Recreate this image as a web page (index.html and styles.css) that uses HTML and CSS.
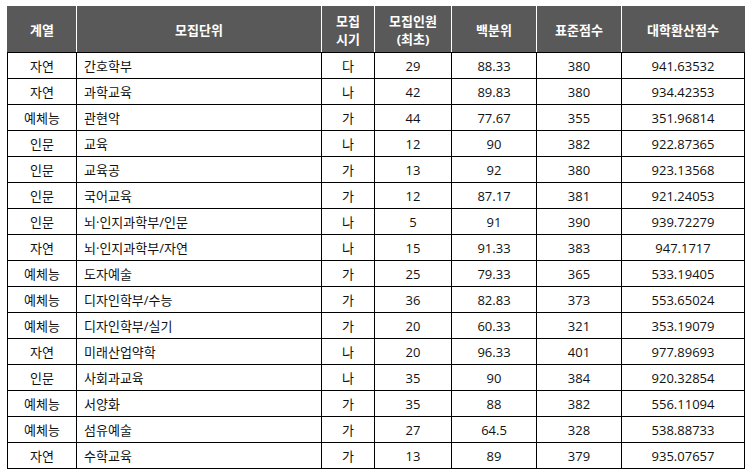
FILE: index.html
```html
<!DOCTYPE html>
<html lang="ko">
<head>
<meta charset="utf-8">
<link rel="stylesheet" href="styles.css">
</head>
<body>
<table class="grid">
  <colgroup>
    <col class="c1"><col class="c2"><col class="c3"><col class="c4"><col class="c5"><col class="c6"><col class="c7">
  </colgroup>
  <thead>
    <tr>
      <th>계열</th>
      <th>모집단위</th>
      <th>모집<br>시기</th>
      <th>모집인원<br>(최초)</th>
      <th>백분위</th>
      <th>표준점수</th>
      <th>대학환산점수</th>
    </tr>
  </thead>
  <tbody>
    <tr><td>자연</td><td class="name">간호학부</td><td>다</td><td>29</td><td>88.33</td><td>380</td><td>941.63532</td></tr>
    <tr><td>자연</td><td class="name">과학교육</td><td>나</td><td>42</td><td>89.83</td><td>380</td><td>934.42353</td></tr>
    <tr><td>예체능</td><td class="name">관현악</td><td>가</td><td>44</td><td>77.67</td><td>355</td><td>351.96814</td></tr>
    <tr><td>인문</td><td class="name">교육</td><td>나</td><td>12</td><td>90</td><td>382</td><td>922.87365</td></tr>
    <tr><td>인문</td><td class="name">교육공</td><td>가</td><td>13</td><td>92</td><td>380</td><td>923.13568</td></tr>
    <tr><td>인문</td><td class="name">국어교육</td><td>가</td><td>12</td><td>87.17</td><td>381</td><td>921.24053</td></tr>
    <tr><td>인문</td><td class="name">뇌·인지과학부/인문</td><td>나</td><td>5</td><td>91</td><td>390</td><td>939.72279</td></tr>
    <tr><td>자연</td><td class="name">뇌·인지과학부/자연</td><td>나</td><td>15</td><td>91.33</td><td>383</td><td>947.1717</td></tr>
    <tr><td>예체능</td><td class="name">도자예술</td><td>가</td><td>25</td><td>79.33</td><td>365</td><td>533.19405</td></tr>
    <tr><td>예체능</td><td class="name">디자인학부/수능</td><td>가</td><td>36</td><td>82.83</td><td>373</td><td>553.65024</td></tr>
    <tr><td>예체능</td><td class="name">디자인학부/실기</td><td>가</td><td>20</td><td>60.33</td><td>321</td><td>353.19079</td></tr>
    <tr><td>자연</td><td class="name">미래산업약학</td><td>나</td><td>20</td><td>96.33</td><td>401</td><td>977.89693</td></tr>
    <tr><td>인문</td><td class="name">사회과교육</td><td>나</td><td>35</td><td>90</td><td>384</td><td>920.32854</td></tr>
    <tr><td>예체능</td><td class="name">서양화</td><td>가</td><td>35</td><td>88</td><td>382</td><td>556.11094</td></tr>
    <tr><td>예체능</td><td class="name">섬유예술</td><td>가</td><td>27</td><td>64.5</td><td>328</td><td>538.88733</td></tr>
    <tr><td>자연</td><td class="name">수학교육</td><td>가</td><td>13</td><td>89</td><td>379</td><td>935.07657</td></tr>
  </tbody>
</table>
</body>
</html>
```
FILE: styles.css
```css
html, body {
  margin: 0;
  padding: 0;
  background: #fff;
}
body {
  padding: 6px 0 0 7px;
  font-family: "Open Sans", "Noto Sans CJK KR", sans-serif;
  font-size: 13px;
  color: #111;
}
.grid {
  border-collapse: collapse;
  table-layout: fixed;
  width: 738px;
}
.c1 { width: 69px; }
.c2 { width: 245px; }
.c3 { width: 53px; }
.c4 { width: 77px; }
.c5 { width: 85px; }
.c6 { width: 85px; }
.c7 { width: 123px; }

.grid th {
  background: #595959;
  color: #fff;
  font-weight: bold;
  height: 45px;
  padding: 0;
  line-height: 18px;
  text-align: center;
  vertical-align: middle;
  border-top: 1px solid #595959;
  border-left: 1px solid #fff;
  border-right: 1px solid #fff;
  border-bottom: 1px solid #000;
}
.grid th:first-child { border-left-color: #595959; }
.grid th:last-child { border-right-color: #595959; }

.grid td {
  border: 1px solid #000;
  height: 25px;
  padding: 0;
  text-align: center;
  vertical-align: middle;
  line-height: 18px;
}
.grid td.name {
  text-align: left;
  padding-left: 7px;
}
```
